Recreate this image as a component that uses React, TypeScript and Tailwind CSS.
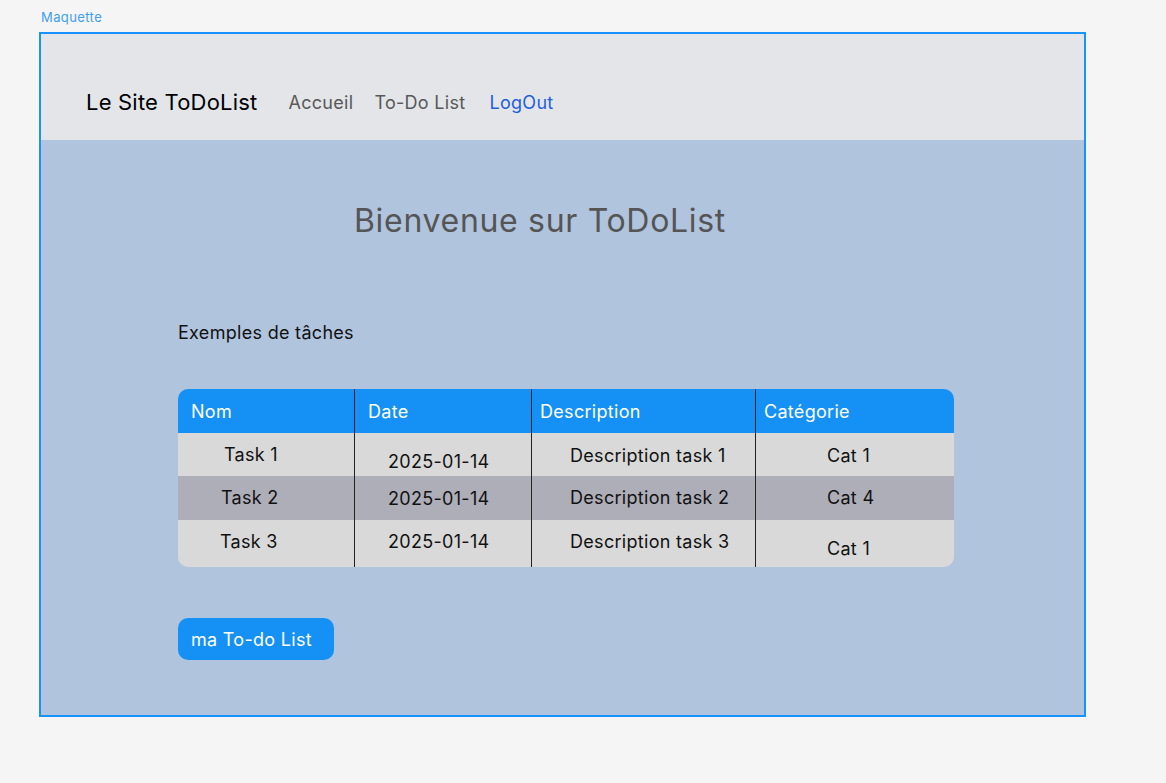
const tasks = [
  { nom: 'Task 1', date: '2025-01-14', desc: 'Description task 1', cat: 'Cat 1', bg: 'bg-[#d9d9d9]', h: 'h-[43px]', nomPl: 'pl-[46px]', nomOff: '-mt-[1px]', dateOff: 'pt-[14px]', descOff: 'pt-[2px]', catOff: 'pt-[2px]' },
  { nom: 'Task 2', date: '2025-01-14', desc: 'Description task 2', cat: 'Cat 4', bg: 'bg-[#aeaeb8]', h: 'h-[44px]', nomPl: 'pl-[43px]', nomOff: '-mt-[1px]', dateOff: '', descOff: '-mt-[1px]', catOff: '-mt-[1px]' },
  { nom: 'Task 3', date: '2025-01-14', desc: 'Description task 3', cat: 'Cat 1', bg: 'bg-[#d9d9d9]', h: 'h-[47px]', nomPl: 'pl-[42px]', nomOff: '-mt-[4px]', dateOff: '-mt-[4px]', descOff: '-mt-[4px]', catOff: 'pt-[10px]' },
]

export default function App() {
  return (
    <div
      className="h-[783px] w-full overflow-hidden bg-[#f5f5f5]"
      style={{ fontFamily: 'Inter, "Liberation Sans", sans-serif' }}
    >
      <div className="pl-[41px] pt-[9px] text-[13px] leading-[16px] tracking-[0.4px] text-[#3d9fef]">Maquette</div>

      <div className="ml-[39px] mt-[7px] w-[1047px] border-2 border-[#1893fd]">
        <header className="flex h-[106px] items-center bg-[#e3e5e9] pl-[45px] pt-[30px]">
          <span className="text-[22px] tracking-[0.2px] text-black">Le Site ToDoList</span>
          <nav className="ml-[31px] flex gap-[21px] text-[18px] tracking-[0.3px]">
            <a className="text-[#585858]">Accueil</a>
            <a className="text-[#585858]">To-Do List</a>
            <a className="ml-[3px] text-[#1f5fd8]">LogOut</a>
          </nav>
        </header>

        <main className="h-[575px] bg-[#b0c4de] pt-[61px]">
          <h1 className="pl-[313px] text-[32px] leading-[39px] tracking-[0.68px] text-[#555555]">Bienvenue sur ToDoList</h1>

          <div className="pl-[137px] tracking-[0.3px]">
            <p className="mt-[82px] text-[18px] leading-[22px] text-[#111111]">Exemples de tâches</p>

            <div className="mt-[45px] w-[776px] overflow-hidden rounded-[10px] text-[18px]">
              <div className="flex h-[44px] bg-[#1591f6] text-white">
                <div className="flex w-[176px] items-center pl-[13px]">Nom</div>
                <div className="flex w-[177px] items-center border-l border-[#222] pl-[13px]">Date</div>
                <div className="flex w-[224px] items-center border-l border-[#222] pl-[8px]">Description</div>
                <div className="flex flex-1 items-center border-l border-[#222] pl-[8px]">Catégorie</div>
              </div>
              {tasks.map((t) => (
                <div key={t.nom} className={`flex ${t.h} ${t.bg} text-[#111111]`}>
                  <div className={`flex w-[176px] items-center ${t.nomPl}`}>
                    <span className={t.nomOff}>{t.nom}</span>
                  </div>
                  <div className="flex w-[177px] items-center border-l border-[#222] pl-[33px]">
                    <span className={t.dateOff}>{t.date}</span>
                  </div>
                  <div className="flex w-[224px] items-center border-l border-[#222] pl-[38px]">
                    <span className={t.descOff}>{t.desc}</span>
                  </div>
                  <div className="flex flex-1 items-center border-l border-[#222] pl-[71px]">
                    <span className={t.catOff}>{t.cat}</span>
                  </div>
                </div>
              ))}
            </div>

            <button
              type="button"
              className="mt-[51px] flex h-[42px] w-[156px] items-center rounded-[10px] bg-[#1591f6] pl-[13px] text-[18px] text-white"
            >
              ma To-do List
            </button>
          </div>
        </main>
      </div>
    </div>
  )
}
